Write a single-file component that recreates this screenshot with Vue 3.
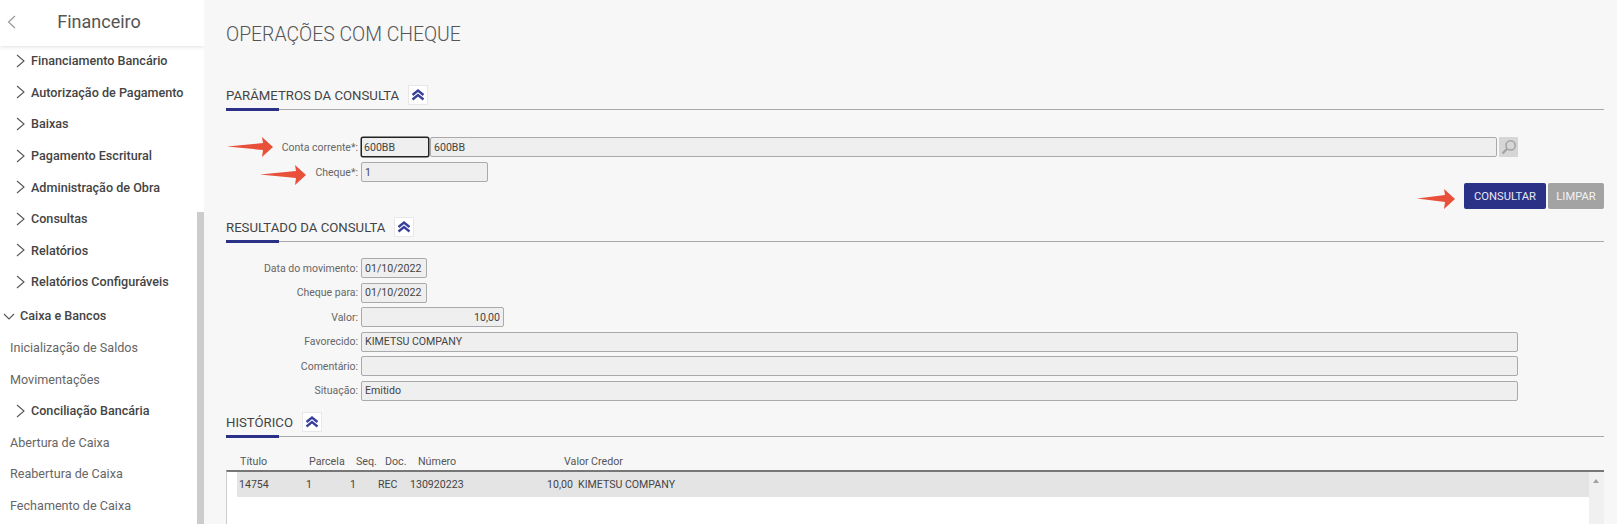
<script setup>
const menu = [
  { t: 'Financiamento Bancário', k: 'sub' },
  { t: 'Autorização de Pagamento', k: 'sub' },
  { t: 'Baixas', k: 'sub' },
  { t: 'Pagamento Escritural', k: 'sub' },
  { t: 'Administração de Obra', k: 'sub' },
  { t: 'Consultas', k: 'sub' },
  { t: 'Relatórios', k: 'sub' },
  { t: 'Relatórios Configuráveis', k: 'sub' },
  { t: 'Caixa e Bancos', k: 'group' },
  { t: 'Inicialização de Saldos', k: 'leaf' },
  { t: 'Movimentações', k: 'leaf' },
  { t: 'Conciliação Bancária', k: 'sub' },
  { t: 'Abertura de Caixa', k: 'leaf' },
  { t: 'Reabertura de Caixa', k: 'leaf' },
  { t: 'Fechamento de Caixa', k: 'leaf' }
]
const results = [
  { l: 'Data do movimento:', v: '01/10/2022', c: 'date' },
  { l: 'Cheque para:', v: '01/10/2022', c: 'date' },
  { l: 'Valor:', v: '10,00', c: 'money' },
  { l: 'Favorecido:', v: 'KIMETSU COMPANY', c: 'wide' },
  { l: 'Comentário:', v: '', c: 'wide' },
  { l: 'Situação:', v: 'Emitido', c: 'wide' }
]
</script>

<template>
  <div class="page">
    <aside class="side">
      <header class="side-head">
        <svg class="back" width="9" height="14" viewBox="0 0 9 14"><path d="M8 1L1.5 7L8 13" fill="none" stroke="#999" stroke-width="1.2"/></svg>
        <span>Financeiro</span>
      </header>
      <nav class="menu">
        <div v-for="m in menu" :key="m.t" class="item" :class="m.k">
          <svg v-if="m.k === 'sub'" width="9" height="14" viewBox="0 0 9 14"><path d="M1 1L8 7L1 13" fill="none" stroke="#555" stroke-width="1.1"/></svg>
          <svg v-if="m.k === 'group'" width="12" height="7" viewBox="0 0 12 7"><path d="M1 1L6 6L11 1" fill="none" stroke="#555" stroke-width="1.1"/></svg>
          <span>{{ m.t }}</span>
        </div>
      </nav>
      <div class="side-scroll"></div>
    </aside>

    <main class="main">
      <h1>OPERAÇÕES COM CHEQUE</h1>

      <section class="sec first">
        <div class="sec-head">
          <h2>PARÂMETROS DA CONSULTA</h2>
          <span class="toggle"><svg width="14" height="12" viewBox="0 0 14 12"><path d="M1.5 6L7 1.5L12.5 6M1.5 10.5L7 6L12.5 10.5" fill="none" stroke="#39409a" stroke-width="2.3"/></svg></span>
        </div>
        <div class="params">
          <div class="row">
            <label>Conta corrente*:</label>
            <div class="in code">600BB</div>
            <div class="in desc">600BB</div>
            <span class="search"><svg width="16" height="16" viewBox="0 0 16 16"><circle cx="9.6" cy="6.4" r="4.6" fill="none" stroke="#a3a3a3" stroke-width="1.5"/><path d="M6.2 9.8L1.6 14.4" stroke="#a3a3a3" stroke-width="2.2"/></svg></span>
          </div>
          <div class="row">
            <label>Cheque*:</label>
            <div class="in cheque">1</div>
          </div>
        </div>
        <div class="actions">
          <span class="btn primary">CONSULTAR</span>
          <span class="btn muted">LIMPAR</span>
        </div>
      </section>

      <section class="sec result">
        <div class="sec-head">
          <h2>RESULTADO DA CONSULTA</h2>
          <span class="toggle"><svg width="14" height="12" viewBox="0 0 14 12"><path d="M1.5 6L7 1.5L12.5 6M1.5 10.5L7 6L12.5 10.5" fill="none" stroke="#39409a" stroke-width="2.3"/></svg></span>
        </div>
        <div class="fields">
          <div v-for="r in results" :key="r.l" class="row">
            <label>{{ r.l }}</label>
            <div class="in" :class="r.c">{{ r.v }}</div>
          </div>
        </div>
      </section>

      <section class="sec hist">
        <div class="sec-head">
          <h2>HISTÓRICO</h2>
          <span class="toggle"><svg width="14" height="12" viewBox="0 0 14 12"><path d="M1.5 6L7 1.5L12.5 6M1.5 10.5L7 6L12.5 10.5" fill="none" stroke="#39409a" stroke-width="2.3"/></svg></span>
        </div>
        <div class="thead">
          <span>Título</span><span>Parcela</span><span>Seq.</span><span>Doc.</span><span>Número</span><span>Valor</span><span>Credor</span>
        </div>
        <div class="tbody">
          <div class="rows">
            <div class="trow">
              <span>14754</span><span>1</span><span>1</span><span>REC</span><span>130920223</span><span class="num">10,00</span><span>KIMETSU COMPANY</span>
            </div>
          </div>
          <div class="tscroll"><i></i></div>
        </div>
      </section>
    </main>

    <svg class="arrow a1" width="46" height="20" viewBox="0 0 46 20"><path d="M0 9.5L36 6L35 0L46 10L35 20L36 13Z" fill="#e8503a"/></svg>
    <svg class="arrow a2" width="46" height="20" viewBox="0 0 46 20"><path d="M0 9.5L36 6L35 0L46 10L35 20L36 13Z" fill="#e8503a"/></svg>
    <svg class="arrow a3" width="38" height="20" viewBox="0 0 38 20"><path d="M0 9.5L28 6L27 0L38 10L27 20L28 13Z" fill="#e8503a"/></svg>
  </div>
</template>

<style>
html, body { margin: 0; background: #f7f7f7; overflow: hidden; }
</style>

<style scoped>
.page {
  position: relative;
  display: flex;
  width: 1617px;
  height: 524px;
  overflow: hidden;
  background: #f7f7f7;
  font-family: Roboto, "Liberation Sans", sans-serif;
  color: #444;
}
.side {
  position: relative;
  flex: 0 0 204px;
  height: 524px;
  overflow: hidden;
  background: #fff;
}
.side-head {
  position: relative;
  z-index: 1;
  display: flex;
  align-items: center;
  justify-content: center;
  height: 46px;
  padding: 0 6px 4px 0;
  box-sizing: border-box;
  font-size: 18px;
  color: #555;
  background: #fff;
  box-shadow: 0 1px 4px rgba(0, 0, 0, .12);
}
.back { position: absolute; left: 7px; top: 15px; }
.menu { display: flex; flex-direction: column; margin-top: -1px; }
.item {
  display: flex;
  align-items: center;
  height: 31.6px;
  font-size: 12.6px;
  flex: none;
}
.sub { padding-left: 16px; font-weight: 500; color: #444; }
.sub svg { margin-right: 6px; }
.group { padding-left: 3px; font-weight: 500; margin-top: 1px; height: 33px; }
.group svg { margin-right: 5px; margin-top: 3px; }
.leaf { padding-left: 10px; color: #666; }
.side-scroll {
  position: absolute;
  right: 0;
  top: 212px;
  bottom: 0;
  width: 7px;
  background: #ccc;
}
.main {
  flex: 1;
  min-width: 0;
  padding: 0 13px 0 22px;
}
h1 {
  margin: 0;
  padding-top: 23px;
  height: 43px;
  font-size: 19.4px;
  line-height: 24px;
  font-weight: 300;
  color: #555;
}
.sec.first { padding-top: 17px; }
.sec-head {
  position: relative;
  display: flex;
  align-items: center;
  gap: 9px;
  height: 25px;
  padding-bottom: 1px;
  border-bottom: 1px solid #a8a8a8;
}
.sec-head::after {
  content: "";
  position: absolute;
  left: 0;
  bottom: -2px;
  width: 53px;
  height: 3px;
  background: #2b3186;
}
h2 {
  margin: 0;
  font-size: 13.2px;
  font-weight: 400;
  color: #444;
}
.toggle {
  display: flex;
  align-items: center;
  justify-content: center;
  width: 20px;
  height: 20px;
  margin-top: -1px;
  background: #fff;
  border: 1px solid #e8e8e8;
  box-sizing: border-box;
}
.params { padding-top: 27px; display: flex; flex-direction: column; gap: 5px; }
.row { display: flex; align-items: center; }
label {
  flex: 0 0 135px;
  padding-right: 3px;
  box-sizing: border-box;
  text-align: right;
  font-size: 10.5px;
  color: #666;
}
.in {
  display: flex;
  align-items: center;
  height: 20px;
  box-sizing: border-box;
  padding: 0 3px;
  font-size: 10.6px;
  color: #444;
  background: #efefef;
  border: 1px solid #aaa;
  border-radius: 2px;
}
.code { width: 68px; border: 1px solid #222; box-shadow: 0 0 0 .5px #222; padding-left: 2px; }
.desc { width: 1067px; margin-left: 1px; }
.search {
  display: flex;
  align-items: center;
  justify-content: center;
  width: 19px;
  height: 20px;
  margin-left: 2px;
  background: #d6d6d6;
}
.cheque { width: 127px; }
.actions { display: flex; justify-content: flex-end; gap: 2px; padding-top: 1px; height: 26px; }
.btn {
  display: flex;
  align-items: center;
  justify-content: center;
  height: 26px;
  font-size: 11.2px;
  color: #e8e8f4;
  border-radius: 2px;
  box-sizing: border-box;
}
.primary { width: 82px; background: #2b3186; }
.muted { width: 56px; background: #a3a3a3; color: #f2f2f2; }
.result { padding-top: 6px; }
.fields { padding-top: 16px; display: flex; flex-direction: column; gap: 4.6px; }
.date { width: 66px; }
.money { width: 143px; justify-content: flex-end; }
.wide { width: 1157px; }
.hist { padding-top: 9px; }
.thead {
  display: grid;
  grid-template-columns: 14px 69px 47px 29px 33px 146px 27px 1fr;
  height: 33px;
  align-items: center;
  font-size: 10.7px;
  color: #555;
  padding-top: 16px;
  box-sizing: border-box;
}
.thead span:first-child { grid-column: 2; }
.tbody {
  display: flex;
  height: 60px;
  background: #fff;
  border-top: 2px solid #777;
  border-left: 1px solid #ccc;
  box-sizing: border-box;
}
.rows { flex: 1; padding-left: 10px; }
.trow {
  display: grid;
  grid-template-columns: 67px 44px 28px 32px 108px 60px 1fr;
  align-items: center;
  height: 25px;
  padding-left: 2px;
  font-size: 10.6px;
  color: #444;
  background: #e4e4e4;
}
.num { text-align: right; margin-right: 5px; }
.tscroll { flex: 0 0 15px; background: #f0f0f0; position: relative; }
.tscroll i {
  position: absolute;
  left: 4px;
  top: 7px;
  border-left: 3.5px solid transparent;
  border-right: 3.5px solid transparent;
  border-bottom: 4px solid #a0a0a0;
}
.arrow { position: absolute; }
.a1 { left: 227px; top: 137px; }
.a2 { left: 260px; top: 165px; }
.a3 { left: 1417px; top: 189px; }
</style>
